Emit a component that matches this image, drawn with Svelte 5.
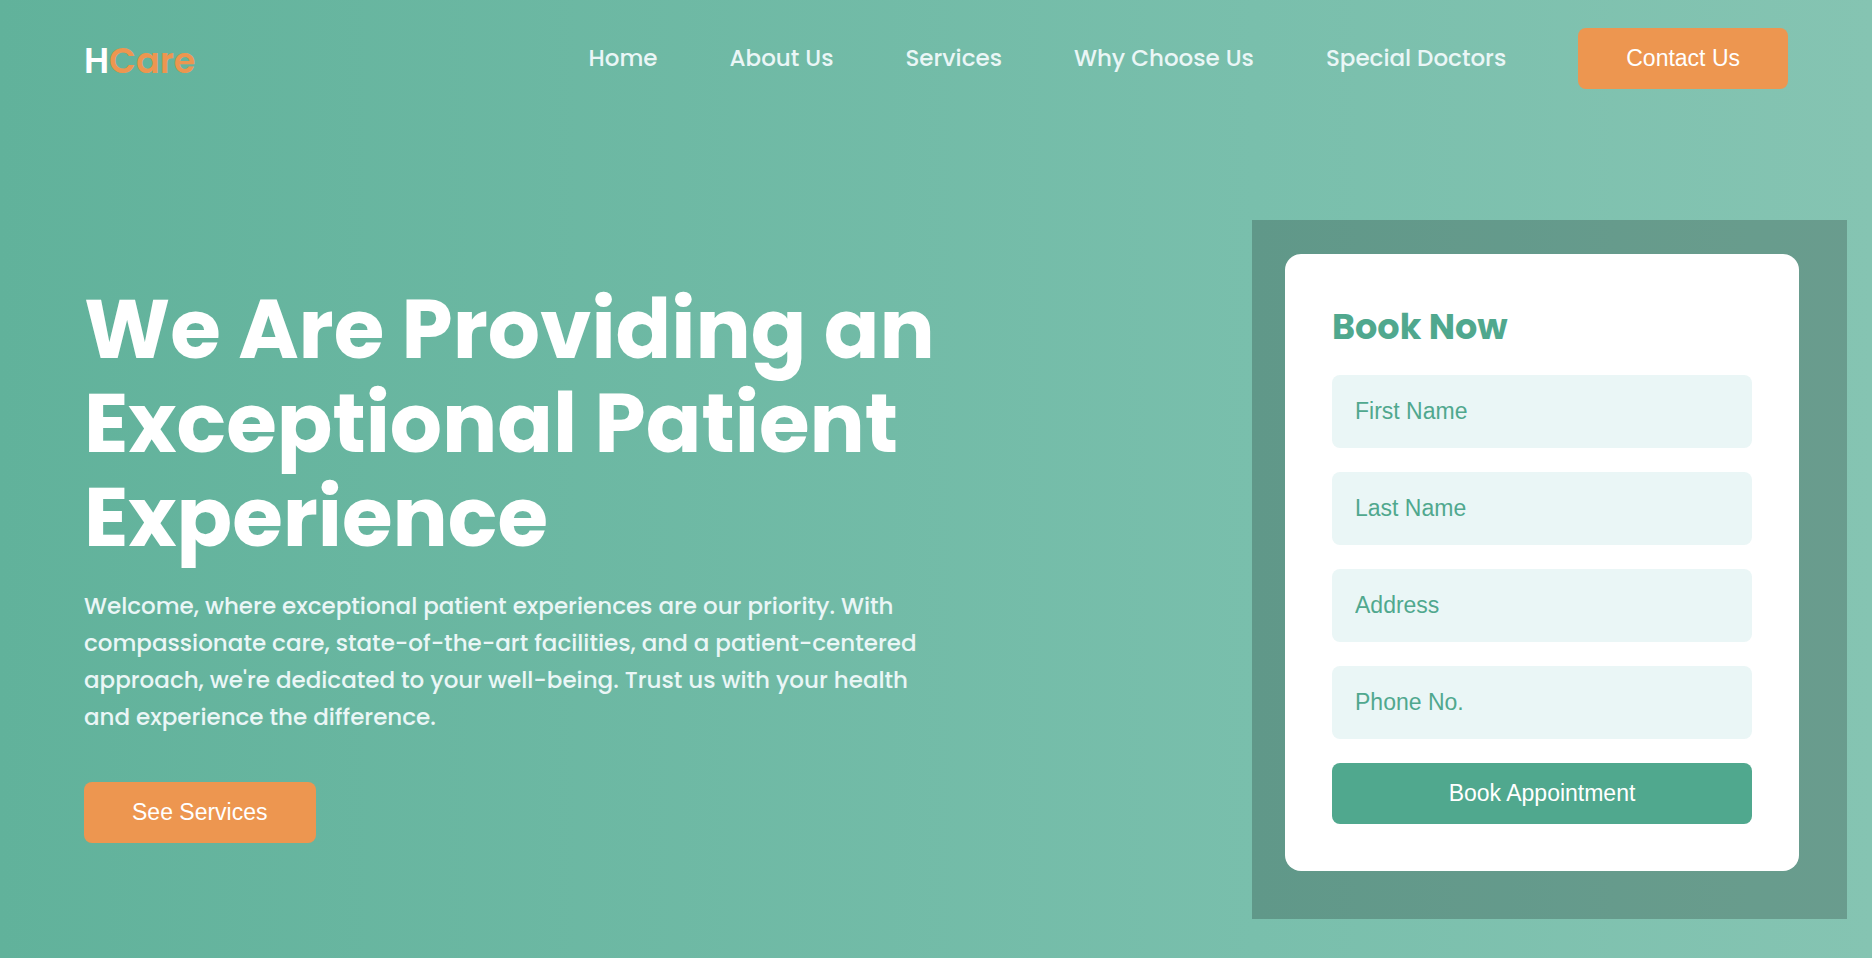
<script>
  const links = ['Home', 'About Us', 'Services', 'Why Choose Us', 'Special Doctors'];
  const fields = [
    { id: 'first-name', label: 'First Name', type: 'text' },
    { id: 'last-name', label: 'Last Name', type: 'text' },
    { id: 'address', label: 'Address', type: 'text' },
    { id: 'phone', label: 'Phone No.', type: 'tel' }
  ];
</script>

<div class="page">
  <header>
    <a class="logo" href="#home">H<span>Care</span></a>
    <nav aria-label="Main">
      {#each links as link}
        <a href="#{link.toLowerCase().replaceAll(' ', '-')}">{link}</a>
      {/each}
      <button class="btn" type="button">Contact Us</button>
    </nav>
  </header>

  <main>
    <section class="intro">
      <h1>We Are Providing an Exceptional Patient Experience</h1>
      <p>
        Welcome, where exceptional patient experiences are our priority. With
        compassionate care, state-of-the-art facilities, and a patient-centered
        approach, we're dedicated to your well-being. Trust us with your health
        and experience the difference.
      </p>
      <button class="btn" type="button">See Services</button>
    </section>

    <div class="panel">
      <form onsubmit={(e) => e.preventDefault()}>
        <h2>Book Now</h2>
        {#each fields as field}
          <input id={field.id} type={field.type} placeholder={field.label} aria-label={field.label} />
        {/each}
        <button class="btn book" type="submit">Book Appointment</button>
      </form>
    </div>
  </main>
</div>

<style>
  :global(body) {
    margin: 0;
  }

  .page {
    display: flex;
    flex-direction: column;
    box-sizing: border-box;
    min-height: 100vh;
    color: #fff;
    font-family: Poppins, Inter, sans-serif;
    background: linear-gradient(to right, #61b29b, #79bfac 67%, #85c4b2);
  }

  header {
    display: flex;
    align-items: center;
    justify-content: space-between;
    padding: 28px 84px;
  }

  .logo {
    padding-top: 4px;
    color: #fff;
    font-size: 35px;
    font-weight: 600;
    line-height: 48px;
    text-decoration: none;
  }

  .logo span {
    color: #ed9650;
  }

  nav {
    display: flex;
    align-items: baseline;
    gap: 72px;
  }

  nav a {
    color: #eaf6f6;
    font-size: 23px;
    font-weight: 500;
    line-height: 36px;
    text-decoration: none;
    white-space: nowrap;
  }

  .btn {
    height: 61px;
    padding: 0 48px;
    border: 0;
    border-radius: 8px;
    color: #fff;
    background: #ed9650;
    font-family: "Liberation Sans", Arial, sans-serif;
    font-size: 23px;
    white-space: nowrap;
    cursor: pointer;
  }

  main {
    display: flex;
    flex: 1;
    align-items: center;
    justify-content: space-between;
    gap: 60px;
    padding: 50px 84px 0;
  }

  .intro {
    flex: 0 1 860px;
  }

  h1 {
    margin: 0 0 23px;
    font-size: 82px;
    font-weight: 700;
    line-height: 94px;
  }

  p {
    margin: 0 0 46px;
    color: #eaf6f6;
    font-size: 23px;
    font-weight: 500;
    line-height: 37px;
  }

  .panel {
    flex: 0 0 auto;
    margin: -34px -59px -48px 0;
    padding: 34px 48px 48px 33px;
    background: rgb(0 0 0 / 20%);
  }

  form {
    display: flex;
    flex-direction: column;
    gap: 24px;
    width: 420px;
    padding: 47px;
    border-radius: 16px;
    background: #fff;
  }

  h2 {
    margin: 0 0 -2px;
    color: #50a88e;
    font-size: 35px;
    font-weight: 700;
    line-height: 52px;
  }

  input {
    box-sizing: border-box;
    width: 100%;
    height: 73px;
    padding: 0 23px;
    border: 0;
    border-radius: 8px;
    color: #50a88e;
    background: #eaf6f6;
    font-family: "Liberation Sans", Arial, sans-serif;
    font-size: 23px;
  }

  input::placeholder {
    color: #50a88e;
    opacity: 1;
  }

  .book {
    background: #50a88e;
  }
</style>
